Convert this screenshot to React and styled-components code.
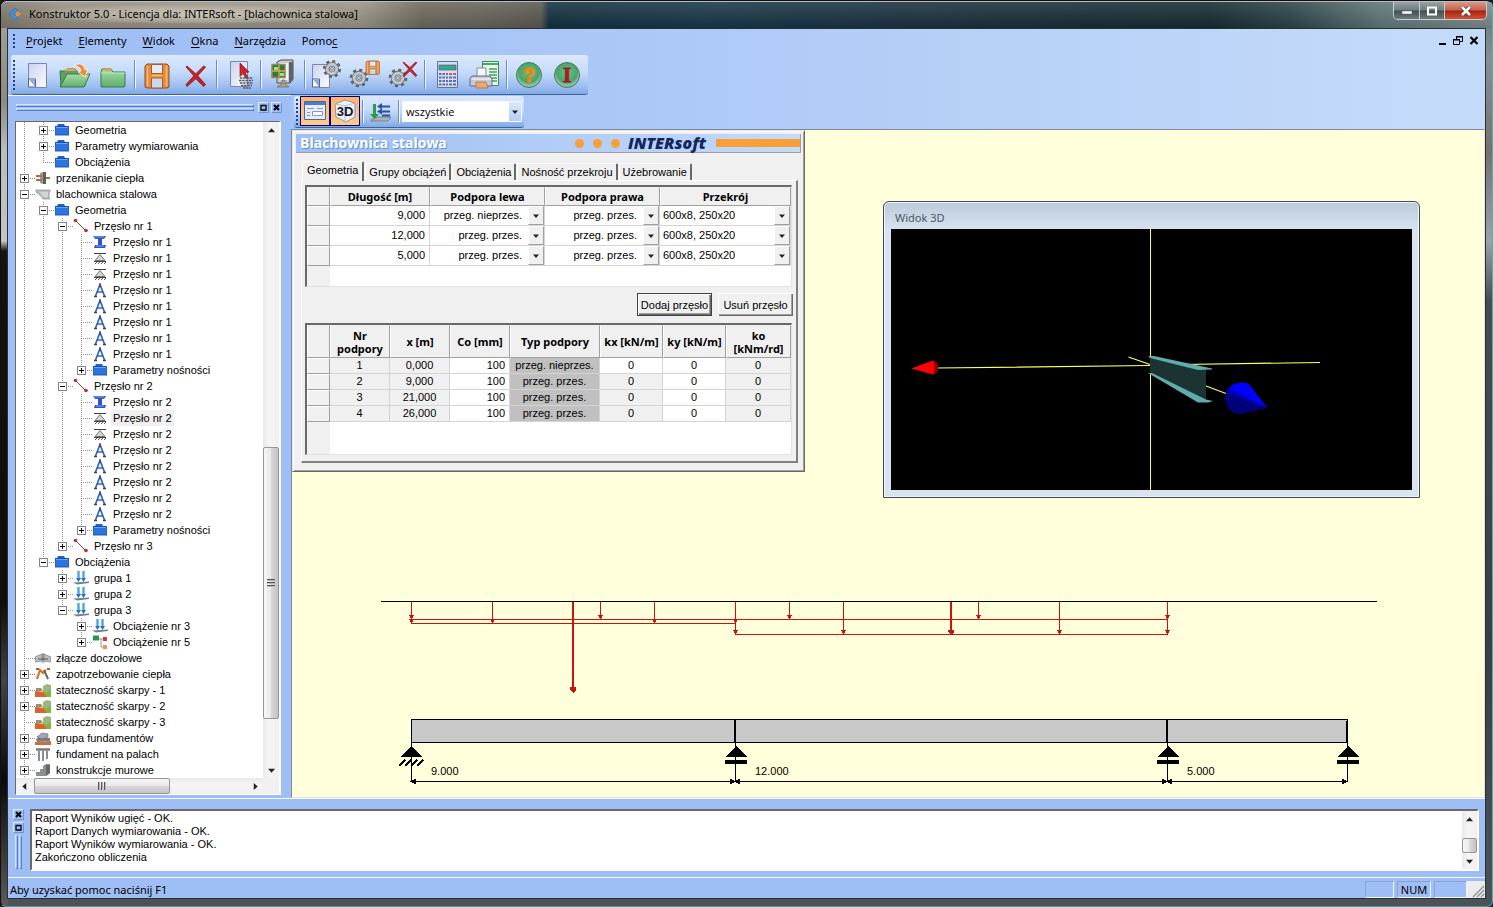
import React from "react";
import styled, { createGlobalStyle } from "styled-components";

const UI = `"Noto Sans", "Open Sans", sans-serif`;
const NARROW = `"Open Sans", "Noto Sans", sans-serif`;
const TEXT = `"Liberation Sans", Arial, sans-serif`;
const BLUE = "#9ebef5";

const Global = createGlobalStyle`
  *, *::before, *::after { box-sizing: border-box; }
  html, body, #root { height: 100%; }
  body { margin: 0; background: #1a1d1e; font: 11px/16px ${TEXT}; color: #000; overflow: hidden; }
  button, select { font: inherit; color: inherit; border-radius: 0; margin: 0; padding: 0; }
  svg { display: block; flex: none; }
`;

/* ---------- window frame ---------- */
const Frame = styled.div`
  min-height: 100%;
  height: 100vh;
  display: flex;
  flex-direction: column;
  border: 1px solid #0c1012;
  border-right-color: #35b8c8;
  border-bottom-color: #2fa3ae;
  border-radius: 7px 7px 6px 6px;
  padding: 0 7px 7px;
  background:
    linear-gradient(#a8a498 0, #8d8a80 100px, #b9bcc0 150px, #c4c4c2 240px, #16120e 250px, #100c08 600px, #444 680px, #0c0a08 780px, #5c5b58 100%) left / 7px 100% no-repeat,
    linear-gradient(#64787a 0, #8b8f8d 60px, #77716a 150px, #9ea2a2 240px, #4a4c4c 300px, #3c3e40 70%, #4c5254 100%) right / 7px 100% no-repeat,
    #4d5355;
`;
const TitleBar = styled.header`
  height: 27px;
  flex: none;
  display: flex;
  justify-content: space-between;
  margin: 0 -7px;
  padding-left: 7px;
  border-top: 1px solid #b9bdbb;
  border-radius: 6px 6px 0 0;
  background:
    linear-gradient(rgba(255,255,255,.12), rgba(0,0,0,.1)),
    linear-gradient(90deg, #7e786c 0, #958f80 60px, #989486 360px, #6d685c 420px, #66635a 480px, #595750 540px, #12303f 548px, #173748 700px, #1a2f3b 960px, #162b30 1210px, #2c4447 1290px, #5f7577 1380px, #7b8a8a 100%);
`;
const Caption = styled.div`
  display: flex;
  align-items: center;
  gap: 7px;
  padding-bottom: 2px;
`;
const AppTitle = styled.h1`
  margin: 0;
  font: 11px/20px ${UI};
  padding: 0 8px;
  margin-left: -8px;
  border-radius: 10px;
  background: radial-gradient(closest-side, rgba(220,216,202,.75), rgba(190,186,172,.45) 80%, rgba(170,166,152,0));
`;
const CaptionButtons = styled.div`
  display: flex;
  height: 18px;
  margin-right: 5px;
  border: 1px solid #c9cfd0;
  border-top: 0;
  border-radius: 0 0 5px 5px;
  overflow: hidden;
`;
const CaptionButton = styled.button`
  width: ${(p) => (p.$close ? 42 : 25)}px;
  border: 0;
  border-left: ${(p) => (p.$first ? 0 : 1)}px solid #c3c9ca;
  display: grid;
  place-items: center;
  background: ${(p) =>
    p.$close
      ? "linear-gradient(#d99a8c, #c4604c 48%, #a8220f 52%, #d0523a)"
      : "linear-gradient(#97a3a4, #6f7d80 48%, #3e4e52 52%, #6c7c7e)"};
`;
const Client = styled.div`
  flex: 1;
  min-height: 0;
  display: flex;
  flex-direction: column;
  border: 1px solid #26303a;
  margin: 0 -1px;
  background: linear-gradient(90deg, ${BLUE}, #a6c4f6 30%, #c4daf9 96%);
`;

/* ---------- menu ---------- */
const MenuRow = styled.div`
  height: 26px;
  flex: none;
  display: flex;
  align-items: center;
  justify-content: space-between;
  padding: 0 5px 2px;
`;
const Menu = styled.nav`
  display: flex;
  align-items: center;
`;
const Grip = styled.span`
  width: 2px;
  height: ${(p) => p.$size}px;
  flex: none;
  margin-right: ${(p) => p.$gap}px;
  background: repeating-linear-gradient(#24418c 0 2px, transparent 2px 4px);
`;
const MenuItem = styled.button`
  border: 0;
  background: none;
  padding: 0 8px;
  font: 11px/20px ${UI};
  u { text-underline-offset: 2px; }
`;
const ChildButtons = styled.div`
  display: flex;
  gap: 4px;
  padding-bottom: 2px;
`;
const PlainButton = styled.button`
  border: 0;
  background: none;
  width: 12px;
  height: 12px;
`;

/* ---------- toolbars ---------- */
const Toolbar = styled.div`
  display: flex;
  align-items: stretch;
  width: max-content;
  flex: none;
  height: ${(p) => p.$height}px;
  margin-left: ${(p) => p.$inset}px;
  padding: 0 2px;
  border-bottom: 1px solid #3b619c;
  border-radius: 3px;
  background: linear-gradient(#dce9fd, #c5dafa 45%, #9dbef0 80%, #82a8e4);
  > ${Grip} { align-self: center; }
`;
const ToolButton = styled.button`
  width: 38px;
  border: 0;
  background: none;
  display: grid;
  place-items: center;
`;
const ToggleButton = styled.button`
  width: 30px;
  height: 30px;
  display: grid;
  place-items: center;
  border: 1px solid #000080;
  background: linear-gradient(#ffb56a, #ffc98a);
`;
const SmallTool = styled(ToolButton)`
  width: 30px;
`;
const Separator = styled.span`
  width: 2px;
  margin: ${(p) => p.$inset}px 2px;
  border-left: 1px solid #6a8ccb;
  border-right: 1px solid #f1f9ff;
`;
const Filter = styled.label`
  display: flex;
  align-self: center;
  width: 120px;
  height: 21px;
  background: #fff;
  border: 1px solid #f8fbff;
  font: 11px/19px ${NARROW};
`;
const FlatSelect = styled.select`
  flex: 1;
  min-width: 0;
  appearance: none;
  border: 0;
  background: transparent;
  padding: 0 ${(p) => (p.$right ? 6 : 3)}px;
  text-align-last: ${(p) => (p.$right ? "right" : "left")};
  outline: 0;
`;
const Arrow = styled.span`
  width: ${(p) => (p.$flat ? 12 : 16)}px;
  display: grid;
  place-items: center;
  background: ${(p) => (p.$flat ? "linear-gradient(#dbe8fc, #b3cdf6)" : "#f0f0f0")};
  border: ${(p) => (p.$flat ? 0 : 1)}px solid;
  border-color: #fff #a0a0a0 #a0a0a0 #fff;
`;

/* ---------- body ---------- */
const Body = styled.div`
  flex: 1;
  min-height: 0;
  display: flex;
`;
const Dock = styled.aside`
  width: 283px;
  flex: none;
  display: flex;
  flex-direction: column;
  border-top: 1px solid #f4f8ff;
  background: ${BLUE};
`;
const DockHeader = styled.div`
  height: 25px;
  flex: none;
  display: flex;
  align-items: center;
  gap: 2px;
  padding: 0 9px 2px 8px;
`;
const Ridges = styled.span`
  display: flex;
  flex-direction: ${(p) => (p.$vertical ? "row" : "column")};
  flex: 1;
  gap: 1px;
  margin-right: ${(p) => (p.$vertical ? 0 : 2)}px;
  &::before, &::after {
    content: "";
    height: ${(p) => (p.$vertical ? "100%" : "3px")};
    width: ${(p) => (p.$vertical ? "3px" : "100%")};
    border: 1px solid;
    border-color: #d5e5fd #5581c4 #5581c4 #d5e5fd;
  }
`;
const TinyButton = styled.button`
  width: 11px;
  height: 11px;
  border: 1px solid;
  border-color: #dceafe #6d94d2 #6d94d2 #dceafe;
  background: none;
  display: grid;
  place-items: center;
`;
const TreeBox = styled.div`
  flex: 1;
  min-height: 0;
  display: grid;
  grid-template: minmax(0, 1fr) 16px / minmax(0, 1fr) 16px;
  margin: 0 10px 3px 7px;
  border: 1px solid;
  border-color: #696969 #fff #fff #696969;
  border-right-width: 2px;
  background: #fff;
`;
const Tree = styled.ul`
  margin: 0;
  padding: 0;
  list-style: none;
  overflow: hidden;
`;
const TreeRow = styled.li`
  height: 16px;
  display: flex;
  align-items: center;
  white-space: nowrap;
`;
const Guide = styled.span`
  width: 19px;
  height: 16px;
  flex: none;
  display: flex;
  align-items: center;
  padding-left: 4px;
  background:
    repeating-linear-gradient(#8c8c8c 0 1px, transparent 1px 2px) 8px 0 / 1px
      ${(p) => (p.$line === "full" ? "16px" : p.$line === "top" ? "8px" : "0")} no-repeat
    ${(p) => (p.$branch ? ", repeating-linear-gradient(90deg, #8c8c8c 0 1px, transparent 1px 2px) 8px 8px / 11px 1px no-repeat" : "")};
`;
const Expander = styled.button`
  width: 9px;
  height: 9px;
  border: 1px solid #848484;
  background:
    linear-gradient(#000, #000) center / 5px 1px no-repeat,
    linear-gradient(#000, #000) center / 1px ${(p) => (p.$open ? 0 : 5)}px no-repeat,
    #fff;
`;
const TreeIcon = styled.span`
  width: 19px;
  flex: none;
`;
const TreeLabel = styled.span`
  padding: 0 2px;
  line-height: 16px;
  background: ${(p) => (p.$selected ? "#f0f0f0" : "none")};
`;
const ScrollTrack = styled.div`
  display: flex;
  flex-direction: ${(p) => (p.$horizontal ? "row" : "column")};
  background: linear-gradient(${(p) => (p.$horizontal ? "180deg" : "90deg")}, #e9e9e9, #f5f5f5 40%, #f0f0f0);
`;
const ScrollArrow = styled.button`
  width: 16px;
  height: 16px;
  max-width: 100%;
  flex: none;
  border: 0;
  background: none;
  display: grid;
  place-items: center;
`;
const ScrollSpace = styled.span`
  flex: ${(p) => p.$grow} 1 0;
`;
const Thumb = styled.span`
  flex: ${(p) => p.$grow} 1 ${(p) => p.$min || 0}px;
  display: grid;
  place-items: center;
  border: 1px solid #979797;
  border-radius: 2px;
  background: linear-gradient(${(p) => (p.$horizontal ? "180deg" : "90deg")}, #f6f6f6, #e9e9eb 48%, #d7d7da 52%, #c4c4c8);
  &::after {
    content: "";
    display: ${(p) => (p.$plain ? "none" : "block")};
    width: 8px;
    height: 8px;
    background: repeating-linear-gradient(${(p) => (p.$horizontal ? "90deg" : "180deg")}, #555 0 1px, #bbb 1px 2px, transparent 2px 3px);
  }
`;
const CornerBox = styled.span`
  background: #f0f0f0;
`;

/* ---------- workspace ---------- */
const Main = styled.main`
  flex: 1;
  min-width: 0;
  display: flex;
  flex-direction: column;
  padding-top: 1px;
`;
const Workspace = styled.section`
  position: relative;
  flex: 1;
  min-height: 0;
  margin-top: 1px;
  display: flex;
  flex-direction: column;
  align-items: flex-start;
  overflow: hidden;
  background: #ffffdc;
  border: 1px solid #808a98;
  border-right-color: #e3e3e3;
  border-bottom-color: #e3e3e3;
`;
const Form = styled.section`
  width: 513px;
  flex: none;
  background: #f0f0f0;
  border: 1px solid;
  border-color: #e3e3e3 #696969 #696969 #e3e3e3;
  box-shadow: inset 1px 1px #fff, inset -1px -1px #a0a0a0;
  padding: 3px 3px 8px 3px;
`;
const FormHeader = styled.header`
  height: 19px;
  display: flex;
  align-items: center;
  padding-left: 4px;
  background: linear-gradient(90deg, ${BLUE}, #c4daf9);
  border-bottom: 1px solid #a0a0a0;
  border-right: 1px solid #a0a0a0;
`;
const FormTitle = styled.h2`
  flex: 1;
  margin: 0;
  color: #fff;
  font: bold 14px/18px ${NARROW};
  text-shadow: 1px 1px #6b8fcb;
`;
const Dots = styled.span`
  display: flex;
  gap: 9px;
  margin-right: 8px;
  &::before, &::after, i { content: ""; width: 9px; height: 9px; border-radius: 50%; background: #f99f35; }
`;
const Brand = styled.strong`
  width: 88px;
  color: #132660;
  font: italic 800 16px/18px ${NARROW};
`;
const BrandBar = styled.span`
  width: 84px;
  height: 8px;
  background: #f99f35;
`;
const Tabs = styled.div`
  display: flex;
  align-items: flex-end;
  height: 27px;
  padding-left: 6px;
`;
const Tab = styled.button`
  height: ${(p) => (p.$active ? 20 : 17)}px;
  line-height: ${(p) => (p.$active ? 16 : 17)}px;
  padding: 0 ${(p) => (p.$active ? 4 : 3)}px ${(p) => (p.$active ? 3 : 0)}px;
  margin-right: 1px;
  background: #f0f0f0;
  border: solid;
  border-width: 1px 2px 0 1px;
  border-color: #fff #696969 #fff #fff;
  border-radius: 2px 2px 0 0;
  position: relative;
  margin-bottom: ${(p) => (p.$active ? -1 : 0)}px;
  z-index: ${(p) => (p.$active ? 1 : 0)};
`;
const TabPage = styled.div`
  margin: 0 3px 0 5px;
  padding: 4px 2px 6px 3px;
  border: solid;
  border-width: 1px 2px 2px 1px;
  border-color: #fff #808080 #808080 #fff;
`;
const GridBox = styled.div`
  width: 487px;
  height: ${(p) => p.$height}px;
  border: solid;
  border-width: 2px 1px 1px 2px;
  border-color: #696969 #e3e3e3 #e3e3e3 #696969;
  background: linear-gradient(90deg, #f0f0f0 23px, #fff 23px);
`;
const Table = styled.table`
  width: 100%;
  table-layout: fixed;
  border-collapse: separate;
  border-spacing: 0;
`;
const HeadCell = styled.th`
  height: ${(p) => p.$height}px;
  padding: 0;
  background: #f0f0f0;
  border: 1px solid;
  border-color: #f0f0f0 #a0a0a0 #a0a0a0 #fff;
  font: bold 11px/13px ${UI};
`;
const RowHead = styled.th`
  padding: 0;
  background: #f0f0f0;
  border: 1px solid;
  border-color: #fff #a0a0a0 #a0a0a0 #fff;
`;
const Cell = styled.td`
  height: ${(p) => p.$height}px;
  padding: 0 ${(p) => (p.$align === "right" ? 4 : 0)}px 0 0;
  line-height: ${(p) => p.$height - 1}px;
  vertical-align: top;
  text-align: ${(p) => p.$align || "center"};
  border-right: 1px solid #d4d4d4;
  border-bottom: 1px solid #d4d4d4;
  background: ${(p) => ({ grey: "#f0f0f0", dark: "#c0c0c0" }[p.$tone] || "#fff")};
`;
const Combo = styled.label`
  display: flex;
  height: 19px;
  line-height: 19px;
`;
const Actions = styled.div`
  display: flex;
  justify-content: flex-end;
  gap: 6px;
  padding: 6px 1px 7px 0;
`;
const PushButton = styled.button`
  width: 75px;
  height: 23px;
  background: #f0f0f0;
  border: ${(p) => (p.$default ? "1px solid #404040" : "0")};
  box-shadow: inset 1px 1px #fff, inset -1px -1px #696969, inset -2px -2px #a0a0a0;
`;
const Viewer = styled.section`
  position: absolute;
  top: 71px;
  right: 64px;
  width: 537px;
  height: 297px;
  display: flex;
  flex-direction: column;
  padding: 0 7px 7px;
  border: 1px solid #404850;
  border-radius: 6px 6px 0 0;
  box-shadow: inset 0 0 0 1px #eef5fc;
  background: linear-gradient(#bccad9, #cfdcea 20px, #d8e4f1 30px);
`;
const ViewerTitle = styled.h2`
  margin: 0;
  height: 27px;
  flex: none;
  padding: 6px 4px 0;
  font: 11px/20px ${UI};
  color: #4c5660;
`;
const Diagram = styled.svg`
  width: 100%;
  flex: 1 0 326px;
`;

/* ---------- bottom ---------- */
const OutputPane = styled.section`
  height: 80px;
  flex: none;
  display: flex;
  gap: 5px;
  padding: 10px 6px 6px 4px;
  border-top: 1px solid #f4f8ff;
  border-bottom: 1px solid #f4f8ff;
  background: ${BLUE};
`;
const OutputTools = styled.div`
  width: 13px;
  display: flex;
  flex-direction: column;
  align-items: center;
  gap: 2px;
  padding-bottom: 2px;
`;
const OutputBox = styled.div`
  flex: 1;
  display: flex;
  justify-content: space-between;
  background: #fff;
  border: 2px solid;
  border-color: #696969 #fff #fff #696969;
`;
const Log = styled.ol`
  margin: 0;
  padding: 1px 3px;
  list-style: none;
  line-height: 13px;
`;
const OutputScroll = styled(ScrollTrack)`
  width: 15px;
`;
const StatusBar = styled.footer`
  height: 20px;
  flex: none;
  display: flex;
  align-items: stretch;
  gap: 3px;
  padding: 3px 0 0 2px;
  background: ${BLUE};
  font: 11px/18px ${UI};
`;
const StatusText = styled.span`
  flex: 1;
`;
const StatusCell = styled.span`
  width: ${(p) => p.$width}px;
  text-align: center;
  border: 1px solid;
  border-color: #8aa3cc #f4f8ff #f4f8ff #8aa3cc;
  line-height: 16px;
`;
const SizeGrip = styled.span`
  width: 18px;
  margin-left: -3px;
  background: linear-gradient(135deg, #f0f0f0, #e4e6ea);
`;

/* ---------- small glyphs ---------- */
const Tri = ({ dir = "down", size = 7 }) => (
  <svg width={size} height={size} viewBox="0 0 8 8" aria-hidden="true">
    <path d={{ down: "M0 2h8L4 6.5z", up: "M0 6h8L4 1.5z", left: "M6 0v8L1.5 4z", right: "M2 0v8l4.500-4z" }[dir]} fill="#222" />
  </svg>
);
const CrossGlyph = () => (
  <svg width="7" height="7" viewBox="0 0 7 7"><path d="M1 1l5 5M6 1L1 6" stroke="#000" strokeWidth="2" /></svg>
);
const SquareGlyph = () => (
  <svg width="7" height="7" viewBox="0 0 7 7"><path d="M1 1.500h5V6H1z" fill="none" stroke="#000" strokeWidth="1.300" /></svg>
);

/* ---------- toolbar icons (32 x 32) ---------- */
const Icon = ({ children, size = 32 }) => (
  <svg width={size} height={size} viewBox={`0 0 ${size} ${size}`} aria-hidden="true">{children}</svg>
);
const Gear = ({ x, y, s = 1 }) => (
  <g transform={`translate(${x} ${y}) scale(${s})`}>
    <circle r="7.500" fill="none" stroke="#5d6268" strokeWidth="4" strokeDasharray="2.900 2.990" />
    <circle r="5" fill="none" stroke="#6c7278" strokeWidth="4.600" />
    <circle r="5" fill="none" stroke="#c3c8cc" strokeWidth="3" />
    <circle r="1.500" fill="#e8eef8" stroke="#666" strokeWidth=".8" />
  </g>
);
const Page = ({ x = 6, y = 4, w = 18, h = 24 }) => (
  <g transform={`translate(${x} ${y})`}>
    <path d={`M.5 .5h${w}v${h}H7L.5 ${h - 7}z`} fill="url(#page)" stroke="#7c86a8" />
    <path d={`M.5 ${h - 8}h7v8H.5z`} fill="#f5f8ff" stroke="#53649a" />
    <path d={`M1 ${h - 7.500}l6 7v-7z`} fill="#9aa9d4" />
  </g>
);
const Floppy = ({ x, y, s = 1 }) => (
  <g transform={`translate(${x} ${y}) scale(${s})`}>
    <path d="M2 0h20l2 2v21l-2 1H2l-2-1V2z" fill="#ec8a34" stroke="#8a5026" />
    <path d="M6.500 .5h11v9h-11z" fill="#e3e9f6" stroke="#a0602e" />
    <path d="M6.500 14h11v10h-11z" fill="#ccd8ee" stroke="#a0602e" />
    <path d="M2.500 2v20M21.500 2v20M7 11.500h10" stroke="#ffc183" strokeWidth="1.500" />
  </g>
);
const RedX = ({ x, y, s = 1 }) => (
  <path transform={`translate(${x} ${y}) scale(${s})`} d="M1 0l9 8 8-8 2 1-8 9 8 9-2 2-8-8-9 8-1-2 8-9-8-9z" fill="#c3242a" stroke="#8b1418" strokeWidth=".8" />
);
const toolbarIcons = {
  nowy: <Icon><Page x={7} /></Icon>,
  otworz: (
    <Icon>
      <path d="M1 12h5l2-2h8l2 3h8v14H2z" fill="#5fa068" stroke="#3a7444" />
      <path d="M6 10h10l1 2H5z" fill="#f0a040" />
      <path d="M1 28L8 15h23l-6 13z" fill="url(#green)" stroke="#3a7a46" />
      <path d="M15 7c5-4 10-2 11 4l3-1-3 8-7-5 3-1c0-3-3-5-7-5z" fill="#f58a2c" stroke="#fff" strokeWidth=".8" />
    </Icon>
  ),
  folder: (
    <Icon>
      <path d="M4 13l1-3h9l2 3h12v14l-1 1H4z" fill="url(#green)" stroke="#3a7a46" />
      <path d="M6 10h8l1 2H6z" fill="#f0a040" />
      <path d="M4 14h24" stroke="#bde6c0" />
    </Icon>
  ),
  zapisz: <Icon><Floppy x={4} y={5} /></Icon>,
  usun: <Icon><RedX x={7} y={7} s={0.98} /></Icon>,
  wskaz: (
    <Icon>
      <path d="M7.500 2.500h17v25h-17z" fill="url(#page)" stroke="#7c86a8" />
      <path d="M17 4l9 9-4 .5 3 5-2 1-3-5-3 3z" fill="#d3202c" stroke="#8a1018" strokeWidth=".7" />
      <path d="M17 19h13M16 21.500h14M17 24h13M18 26.500h11M20 29h8" stroke="#555b66" strokeWidth="1.600" strokeDasharray="2.500 .7" />
    </Icon>
  ),
  archiwum: (
    <Icon>
      <path d="M10 3l4-2h12v19l-3 4H10z" fill="#c9ced2" stroke="#4a4e52" />
      <path d="M22 3h4v18l-4 3z" fill="#5f6368" />
      <path d="M13 4h8v17h-8z" fill="#f3f4f5" />
      <path d="M5 5.500h13v13H5z" fill="#2f7d3b" stroke="#9b8458" strokeWidth="1.500" />
      <path d="M5 12h13M12 6v12" stroke="#e6a53c" strokeWidth="1.300" />
      <path d="M7 8h4v3H7zM13 14h4v3h-4z" fill="#8fe3a2" />
      <path d="M15 21v4l-5 3h12l-4-3v-4z" fill="#a8a18c" stroke="#6e6753" strokeWidth=".7" />
    </Icon>
  ),
  nowyElement: <Icon><Page x={1} y={5} w={17} h={23} /><Gear x={21} y={10} s={0.95} /></Icon>,
  zapiszElement: <Icon><Gear x={10} y={19} s={0.98} /><Floppy x={17} y={2} s={0.56} /></Icon>,
  usunElement: <Icon><Gear x={11} y={19} s={0.98} /><RedX x={16} y={3} s={0.7} /></Icon>,
  kalkulator: (
    <Icon>
      <path d="M6.500 2.500h20v26h-20z" fill="#d5ddf0" stroke="#62719c" />
      <path d="M8 6h17v5H8z" fill="#3ba58a" stroke="#54606e" strokeWidth=".7" />
      <path d="M8 15h9M8 18.500h9M8 22h9M8 25.500h9" stroke="#5b6fa4" strokeWidth="2" strokeDasharray="2.500 1" />
      <path d="M18 15h8" stroke="#c65a68" strokeWidth="2" strokeDasharray="3 1" />
      <path d="M18 18.500h8M18 22h8M18 25.500h8" stroke="#5b6fa4" strokeWidth="2" strokeDasharray="3 1" />
    </Icon>
  ),
  drukuj: (
    <Icon>
      <path d="M13.500 2.500h16v24h-16z" fill="#eefaf0" stroke="#3b8c4e" />
      <path d="M14 4h15v2H14z" fill="#3fae5a" />
      <path d="M20 10h8M20 13h8M20 16h8M20 19h8M20 22h8" stroke="#41a35b" strokeWidth="1.600" />
      <path d="M8 9h9v9H8z" fill="#f5f8ff" stroke="#7e89a6" />
      <path d="M3 17h18l2 3v7H1v-7z" fill="#c3c9d6" stroke="#606a80" />
      <path d="M2 20h20" stroke="#fff" />
      <path d="M7 23h10l2 6H7z" fill="#f0a76a" stroke="#a06a40" strokeWidth=".7" />
    </Icon>
  ),
  pomoc: (
    <Icon>
      <circle cx="16" cy="16" r="12.500" fill="url(#orb)" stroke="#457a60" />
      <text x="16" y="23" textAnchor="middle" fontFamily="Liberation Sans, sans-serif" fontWeight="bold" fontSize="21" fill="#ff8c10" stroke="#ee7c10" strokeWidth="1">?</text>
    </Icon>
  ),
  intersoft: (
    <Icon>
      <circle cx="16" cy="16" r="12.500" fill="url(#orb)" stroke="#457a60" />
      <text x="16" y="23" textAnchor="middle" fontFamily="Liberation Serif, serif" fontWeight="bold" fontSize="21" fill="#b8182c" stroke="#a01428" strokeWidth=".8">I</text>
    </Icon>
  ),
};

/* ---------- tree icons (16 x 16) ---------- */
const treeIcons = {
  folder: (
    <Icon size={16}>
      <path d="M1 4h2l1-2h6l1 2h4v9.500H1z" fill="#1f62cf" />
      <path d="M2 5h12v7H2z" fill="#2f74dc" />
      <path d="M1 4.500h14" stroke="#1450b0" /><path d="M2 5.500h12" stroke="#6ba6f4" />
    </Icon>
  ),
  wall: (
    <Icon size={16}>
      <path d="M5 3l3-1v12l-3-1z" fill="#9a9a98" /><path d="M8 2h3v12H8z" fill="#5c5f62" />
      <path d="M1 6h6M1 10h6M11 8h4" stroke="#b56a3a" strokeWidth="1.800" />
    </Icon>
  ),
  plate: (
    <Icon size={16}>
      <path d="M1 4h14v2l-1 1v5l1 1H8l-2-3-5-4z" fill="#b9bdbd" stroke="#8a8e8e" strokeWidth=".7" />
      <path d="M5 6h8v5H8z" fill="#d2d5d5" />
    </Icon>
  ),
  span: (
    <Icon size={16}>
      <path d="M3 3l10 10" stroke="#555" /><circle cx="2.500" cy="2.500" r="1.800" fill="#c92a2a" /><circle cx="13" cy="12.500" r="1.800" fill="#c92a2a" />
    </Icon>
  ),
  profile: (
    <Icon size={16}>
      <path d="M1 2h13l-2 3h-2v6h4l-1 3H2l1-3h3V5H3z" fill="#2c55c8" /><path d="M2 3h10M4 12h8" stroke="#86a8f4" />
    </Icon>
  ),
  support: (
    <Icon size={16}>
      <path d="M2 3.500h12M2 11.500h12" stroke="#444" /><path d="M8 4.500l5 6H3z" fill="#d2d6d2" stroke="#777" />
      <path d="M3 14l2-2M6 14l2-2M9 14l2-2M12 14l2-2" stroke="#555" />
    </Icon>
  ),
  truss: (
    <Icon size={16}>
      <path d="M8 2.500L3.500 14M8 2.500L12.500 14M4.500 10h7" stroke="#3c62b0" strokeWidth="1.700" fill="none" />
      <path d="M8 1v4M2 14.500h3M11 14.500h3" stroke="#27427e" strokeWidth="1.300" />
    </Icon>
  ),
  load: (
    <Icon size={16}>
      <path d="M5.500 1v8M10.500 1v8" stroke="#4fa3e6" strokeWidth="2.400" />
      <path d="M3 8h5l-2.500 4zM8 8h5l-2.500 4z" fill="#2c6fc4" />
      <path d="M0 12.500l16-1v1.500l-12 1.500z" fill="#6f8488" />
    </Icon>
  ),
  nodes: (
    <Icon size={16}>
      <path d="M6 5h6M9 5v8h3" stroke="#999" fill="none" />
      <path d="M1 1.500h6v5H1z" fill="#25984a" /><path d="M11 3h4v4h-4z" fill="#c83a48" /><path d="M11 11h4v4h-4z" fill="#ef9348" />
    </Icon>
  ),
  joint: (
    <Icon size={16}>
      <path d="M0 7l7-3v7l-7 1zM9 4l7 3v5l-7-1z" fill="#bcbfc0" stroke="#85898b" strokeWidth=".8" /><path d="M8 3v10M3 9h10" stroke="#555" />
    </Icon>
  ),
  heat: (
    <Icon size={16}>
      <path d="M2 13l3-9 3 3 3-3" stroke="#d8742a" strokeWidth="2.200" fill="none" /><path d="M9 4l4 9" stroke="#666" strokeWidth="2" />
      <path d="M1 3h3M12 3h3" stroke="#b95a28" strokeWidth="2" />
    </Icon>
  ),
  slope: (
    <Icon size={16}>
      <path d="M0 14l7-4 9-7v12H0z" fill="#7eb83e" /><path d="M0 14V9l8 1 4 5H0z" fill="#e0602c" />
      <path d="M8 4l4-2 4 1v5l-5 3-3-3z" fill="#9bb57e" /><path d="M1 6h5l2 3-7 1z" fill="#a58a6e" />
    </Icon>
  ),
  footing: (
    <Icon size={16}>
      <path d="M0 12l16-1v4H0z" fill="#c4713a" /><path d="M1 9l4-2 10 1v3l-13 1z" fill="#7b7f82" /><path d="M2 7l5-4 6 1v3l-6 2z" fill="#a4a8aa" stroke="#5d6062" strokeWidth=".6" />
    </Icon>
  ),
  piles: (
    <Icon size={16}>
      <path d="M1 3.500h14" stroke="#777" strokeWidth="2.500" /><path d="M4 5v10M8 5v10M12 5v8" stroke="#8b8e90" strokeWidth="2" />
    </Icon>
  ),
  masonry: (
    <Icon size={16}>
      <path d="M1 14v-4h4V7h3V4l3-2h4v9l-4 3z" fill="#8b8f91" /><path d="M11 3h4v8l-4 3z" fill="#66696b" />
    </Icon>
  ),
};

const rep = (n, item) => Array.from({ length: n }, () => item);
const spanChildren = (nr, selected) => [
  [3, "profile", `Przęsło nr ${nr}`],
  [3, "support", `Przęsło nr ${nr}`, null, selected],
  [3, "support", `Przęsło nr ${nr}`],
  ...rep(5, [3, "truss", `Przęsło nr ${nr}`]),
  [3, "folder", "Parametry nośności", "+"],
];
const treeData = [
  [1, "folder", "Geometria", "+"],
  [1, "folder", "Parametry wymiarowania", "+"],
  [1, "folder", "Obciążenia"],
  [0, "wall", "przenikanie ciepła", "+"],
  [0, "plate", "blachownica stalowa", "-"],
  [1, "folder", "Geometria", "-"],
  [2, "span", "Przęsło nr 1", "-"],
  ...spanChildren(1, false),
  [2, "span", "Przęsło nr 2", "-"],
  ...spanChildren(2, true),
  [2, "span", "Przęsło nr 3", "+"],
  [1, "folder", "Obciążenia", "-"],
  [2, "load", "grupa 1", "+"],
  [2, "load", "grupa 2", "+"],
  [2, "load", "grupa 3", "-"],
  [3, "load", "Obciążenie nr 3", "+"],
  [3, "nodes", "Obciążenie nr 5", "+"],
  [0, "joint", "złącze doczołowe"],
  [0, "heat", "zapotrzebowanie ciepła", "+"],
  [0, "slope", "stateczność skarpy - 1", "+"],
  [0, "slope", "stateczność skarpy - 2", "+"],
  [0, "slope", "stateczność skarpy - 3"],
  [0, "footing", "grupa fundamentów", "+"],
  [0, "piles", "fundament na palach", "+"],
  [0, "masonry", "konstrukcje murowe", "+"],
];

/* A level keeps its guide line as long as a later row returns to it before a shallower one. */
const continues = (index, level) => {
  if (level === 0) return true;
  for (let i = index + 1; i < treeData.length; i++) {
    if (treeData[i][0] < level) return false;
    if (treeData[i][0] === level) return true;
  }
  return false;
};

function ProjectTree() {
  return (
    <Tree>
      {treeData.map(([depth, icon, label, state, selected], i) => (
        <TreeRow key={i}>
          {Array.from({ length: depth }, (_, level) => (
            <Guide key={level} $line={continues(i, level) ? "full" : "none"} />
          ))}
          <Guide $branch $line={continues(i, depth) ? "full" : "top"}>
            {state && <Expander $open={state === "-"} aria-label={state === "-" ? "Zwiń" : "Rozwiń"} />}
          </Guide>
          <TreeIcon>{treeIcons[icon]}</TreeIcon>
          <TreeLabel $selected={selected}>{label}</TreeLabel>
        </TreeRow>
      ))}
    </Tree>
  );
}

const menuItems = [["", "P", "rojekt"], ["", "E", "lementy"], ["", "W", "idok"], ["", "O", "kna"], ["", "N", "arzędzia"], ["Pomo", "c", ""]];
const toolGroups = [
  [["nowy", "Nowy projekt"], ["otworz", "Otwórz"], ["folder", "Zamknij"]],
  [["zapisz", "Zapisz"], ["usun", "Usuń"]],
  [["wskaz", "Wybierz"]],
  [["archiwum", "Archiwum"]],
  [["nowyElement", "Nowy element"], ["zapiszElement", "Zapisz element"], ["usunElement", "Usuń element"]],
  [["kalkulator", "Obliczenia"], ["drukuj", "Drukuj"]],
  [["pomoc", "Pomoc"], ["intersoft", "O programie"]],
];

const spans = [
  ["9,000", "przeg. nieprzes.", "przeg. przes."],
  ["12,000", "przeg. przes.", "przeg. przes."],
  ["5,000", "przeg. przes.", "przeg. przes."],
];
const supports = [
  ["1", "0,000", "przeg. nieprzes."],
  ["2", "9,000", "przeg. przes."],
  ["3", "21,000", "przeg. przes."],
  ["4", "26,000", "przeg. przes."],
];

const CellSelect = ({ value, right, label }) => (
  <Combo>
    <FlatSelect $right={right} aria-label={label} defaultValue={value}>
      <option>{value}</option>
    </FlatSelect>
    <Arrow><Tri size={6} /></Arrow>
  </Combo>
);

const Columns = ({ widths }) => (
  <colgroup>{widths.map((w, i) => <col key={i} style={{ width: w || undefined }} />)}</colgroup>
);

function SpanTable() {
  return (
    <GridBox $height={102}>
      <Table>
        <Columns widths={[23, 100, 115, 115, 0]} />
        <thead>
          <tr>
            {["", "Długość [m]", "Podpora lewa", "Podpora prawa", "Przekrój"].map((h) => <HeadCell key={h} $height={19}>{h}</HeadCell>)}
          </tr>
        </thead>
        <tbody>
          {spans.map(([len, left, right]) => (
            <tr key={len}>
              <RowHead />
              <Cell $height={20} $align="right">{len}</Cell>
              <Cell $height={20}><CellSelect value={left} right label="Podpora lewa" /></Cell>
              <Cell $height={20}><CellSelect value={right} right label="Podpora prawa" /></Cell>
              <Cell $height={20}><CellSelect value="600x8, 250x20" label="Przekrój" /></Cell>
            </tr>
          ))}
        </tbody>
      </Table>
    </GridBox>
  );
}

function SupportTable() {
  return (
    <GridBox $height={132}>
      <Table>
        <Columns widths={[23, 60, 60, 60, 90, 63, 63, 0]} />
        <thead>
          <tr>
            {["", "Nr podpory", "x [m]", "Co [mm]", "Typ podpory", "kx [kN/m]", "ky [kN/m]", "ko [kNm/rd]"].map((h) => (
              <HeadCell key={h} $height={33}>{h}</HeadCell>
            ))}
          </tr>
        </thead>
        <tbody>
          {supports.map(([nr, x, type], i) => (
            <tr key={nr}>
              <RowHead />
              <Cell $height={16} $tone="grey">{nr}</Cell>
              <Cell $height={16} $tone="grey">{x}</Cell>
              <Cell $height={16} $align="right">100</Cell>
              <Cell $height={16} $tone="dark">{type}</Cell>
              <Cell $height={16} $tone={i ? "grey" : ""}>0</Cell>
              <Cell $height={16}>0</Cell>
              <Cell $height={16} $tone="grey">0</Cell>
            </tr>
          ))}
        </tbody>
      </Table>
    </GridBox>
  );
}

function GirderForm() {
  return (
    <Form>
      <FormHeader>
        <FormTitle>Blachownica stalowa</FormTitle>
        <Dots><i /></Dots>
        <Brand>INTERsoft</Brand>
        <BrandBar />
      </FormHeader>
      <Tabs role="tablist">
        {["Geometria", "Grupy obciążeń", "Obciążenia", "Nośność przekroju", "Użebrowanie"].map((t, i) => (
          <Tab key={t} role="tab" aria-selected={i === 0} $active={i === 0}>{t}</Tab>
        ))}
      </Tabs>
      <TabPage>
        <SpanTable />
        <Actions>
          <PushButton $default>Dodaj przęsło</PushButton>
          <PushButton>Usuń przęsło</PushButton>
        </Actions>
        <SupportTable />
      </TabPage>
    </Form>
  );
}

function View3D() {
  return (
    <Viewer>
      <ViewerTitle>Widok 3D</ViewerTitle>
      <svg width="521" height="261" viewBox="891 229 521 261" role="img" aria-label="Widok 3D">
        <path d="M891 229h521v261H891z" fill="#000" />
        <g stroke="#ffff60" fill="none">
          <path d="M1150.500 229v261" />
          <path d="M936 368L1150 365.500M1150 365L1320 362.500" strokeWidth="1.200" />
          <path d="M1128.500 357L1150 364.500M1206 386L1226 393.500" strokeWidth="1.200" />
        </g>
        <path d="M911 368.500l22-8c4 2 4 12 0 14z" fill="#f00" />
        <path d="M933 360.500c7 0 7 14 0 14 2-4 2-10 0-14z" fill="#8c0000" />
        <path d="M1150 357L1206 369V401L1150 374z" fill="#1b3333" />
        <path d="M1148 356h6l58 12.500v1l-14 .5-48-12z" fill="#5eacac" />
        <path d="M1148 373h4l54 26.500 7 1.500-5 1.500h-10z" fill="#5eacac" />
        <path d="M1226 393c3-9 15-13 23-9l18 23.500-25 6c-11 1-18-7-16-20.500z" fill="#00f" />
        <path d="M1226 392l41 15.500-25 6c-11 1-18-7-16-21.500z" fill="#000078" />
        <path d="M1228 388l39 19.500-41-14z" fill="#0000b0" />
      </svg>
    </Viewer>
  );
}

const RED = "#c8140c";
const DownArrow = ({ x, y, top = 602 }) => (
  <g stroke={RED} fill={RED}>
    <path d={`M${x + 0.5} ${top}V${y}`} />
    <path d={`M${x - 1.500} ${y - 4}h4l-2 4z`} />
  </g>
);
const Roller = ({ x }) => (
  <g>
    <path d={`M${x + 0.5} 743v38.500`} stroke="#000" />
    <path d={`M${x + 1} 746l11 11h-22z`} />
    <path d={`M${x - 10} 760h22v4h-22z`} />
  </g>
);
const DimLine = ({ from, to }) => (
  <path d={`M${from} 781.500H${to}M${from + 4.500} 779.500l-4 2 4 2zM${to - 4.500} 779.500l4 2-4 2z`} stroke="#000" fill="none" />
);

function BeamDiagram() {
  return (
    <Diagram viewBox="292 472 1192 326" preserveAspectRatio="xMinYMin meet" role="img" aria-label="Schemat belki">
      <g shapeRendering="crispEdges">
        <path d="M381 601.500H1377" stroke="#000" />
        <path d="M411 619.500H1168M411 623.500H736M735 634.500H1168" stroke={RED} />
        {[[411, 619], [411, 623], [492, 623], [600, 619], [654, 623], [735, 623], [735, 634], [789, 619], [843, 634], [978, 619], [1059, 634], [1167, 619], [1167, 634]].map(([x, y]) => (
          <DownArrow key={`${x}-${y}`} x={x} y={y} />
        ))}
        <path d="M573 602v88M951 602v30" stroke={RED} strokeWidth="2" />
        <path d="M570 687h6v3l-3 3-3-3zM948 630h6v2l-3 3-3-3z" fill={RED} />
        <path d="M411.500 719.500H1347.500V742.500H411.500z" fill="#c8c8c8" stroke="#000" />
        <path d="M735 720v23M1167 720v23M1347 721v22" stroke="#000" strokeWidth="2" />
        <path d="M411.500 743v38.500" stroke="#000" />
        <path d="M411.500 746l11 11h-22z" />
        <path d="M399 766l6-6M405 766l6-6M411 766l6-6M417 766l6-6" stroke="#000" strokeWidth="1.500" />
        <Roller x={735} /><Roller x={1167} /><Roller x={1347} />
        <DimLine from={411} to={735} /><DimLine from={735} to={1167} /><DimLine from={1167} to={1347} />
      </g>
      <g fontFamily="Liberation Sans, Arial, sans-serif" fontSize="11">
        <text x="431" y="775">9.000</text><text x="755" y="775">12.000</text><text x="1187" y="775">5.000</text>
      </g>
    </Diagram>
  );
}

export default function App() {
  return (
    <Frame>
      <Global />
      <svg width="0" height="0" style={{ position: "absolute" }} aria-hidden="true">
        <defs>
          <linearGradient id="page" x1="0" y1="0" x2="1" y2="1"><stop stopColor="#c9d3f0" /><stop offset="1" stopColor="#fbfcff" /></linearGradient>
          <linearGradient id="green" x1="0" y1="0" x2="0" y2="1"><stop stopColor="#a6dcaa" /><stop offset="1" stopColor="#5fae6c" /></linearGradient>
          <radialGradient id="orb" cy=".4"><stop stopColor="#68c884" /><stop offset=".8" stopColor="#46a468" /><stop offset="1" stopColor="#8cbfa0" /></radialGradient>
        </defs>
      </svg>
      <TitleBar>
        <Caption>
          <svg width="14" height="16" viewBox="0 0 14 16"><path d="M7 2l3 2-4 4 4 4-3 2-6-6z" fill="#3f8fdc" stroke="#2b6bb0" strokeWidth=".6" /><path d="M9 5l4 3-4 3-2-3z" fill="#f08a3c" /></svg>
          <AppTitle>Konstruktor 5.0 - Licencja dla: INTERsoft - [blachownica stalowa]</AppTitle>
        </Caption>
        <CaptionButtons>
          <CaptionButton $first aria-label="Minimalizuj"><svg width="12" height="10" viewBox="0 0 12 10"><path d="M1 5h10v3H1z" fill="#fff" stroke="#556" strokeWidth=".5" /></svg></CaptionButton>
          <CaptionButton aria-label="Maksymalizuj"><svg width="12" height="10" viewBox="0 0 12 10"><path d="M2 1.500h8v7H2z" fill="none" stroke="#fff" strokeWidth="2" /></svg></CaptionButton>
          <CaptionButton $close aria-label="Zamknij"><svg width="12" height="10" viewBox="0 0 12 10"><path d="M2 1l8 8M10 1L2 9" stroke="#5a2a28" strokeWidth="4" /><path d="M2 1l8 8M10 1L2 9" stroke="#fff" strokeWidth="2.600" /></svg></CaptionButton>
        </CaptionButtons>
      </TitleBar>
      <Client>
        <MenuRow>
          <Menu>
            <Grip $size={14} $gap={3} />
            {menuItems.map(([before, key, after]) => (
              <MenuItem key={before + key}>{before}<u>{key}</u>{after}</MenuItem>
            ))}
          </Menu>
          <ChildButtons>
            <PlainButton aria-label="Minimalizuj okno"><svg width="12" height="12" viewBox="0 0 12 12"><path d="M3 9h7v2H3z" /></svg></PlainButton>
            <PlainButton aria-label="Przywróć okno"><svg width="12" height="12" viewBox="0 0 12 12"><path d="M4.500 5V2.500h6v5H8M1.500 5.500h6v5h-6z" fill="none" stroke="#000" /><path d="M4 2h7v1.500H4zM1 5h7v1.500H1z" /></svg></PlainButton>
            <PlainButton aria-label="Zamknij okno"><svg width="12" height="12" viewBox="0 0 12 12"><path d="M2.500 3l7 7M9.500 3l-7 7" stroke="#000" strokeWidth="2.200" /></svg></PlainButton>
          </ChildButtons>
        </MenuRow>
        <Toolbar $height={40} $inset={3} role="toolbar" aria-label="Główny">
          <Grip $size={30} $gap={3} />
          {toolGroups.map((group, g) => (
            <React.Fragment key={g}>
              {g > 0 && <Separator $inset={5} />}
              {group.map(([icon, label]) => <ToolButton key={icon} aria-label={label}>{toolbarIcons[icon]}</ToolButton>)}
            </React.Fragment>
          ))}
        </Toolbar>
        <Body>
          <Dock>
            <DockHeader>
              <Ridges />
              <TinyButton aria-label="Odepnij panel"><SquareGlyph /></TinyButton>
              <TinyButton aria-label="Zamknij panel"><CrossGlyph /></TinyButton>
            </DockHeader>
            <TreeBox>
              <ProjectTree />
              <ScrollTrack>
                <ScrollArrow aria-label="W górę"><Tri dir="up" /></ScrollArrow>
                <ScrollSpace $grow={309} />
                <Thumb $grow={271} />
                <ScrollSpace $grow={43} />
                <ScrollArrow aria-label="W dół"><Tri /></ScrollArrow>
              </ScrollTrack>
              <ScrollTrack $horizontal>
                <ScrollArrow aria-label="W lewo"><Tri dir="left" /></ScrollArrow>
                <ScrollSpace $grow={2} />
                <Thumb $horizontal $grow={135} />
                <ScrollSpace $grow={77} />
                <ScrollArrow aria-label="W prawo"><Tri dir="right" /></ScrollArrow>
              </ScrollTrack>
              <CornerBox />
            </TreeBox>
          </Dock>
          <Main>
            <Toolbar $height={32} $inset={3} role="toolbar" aria-label="Widok">
              <Grip $size={26} $gap={2} />
              <ToggleButton aria-label="Formularz" aria-pressed="true">
                <Icon size={24}>
                  <path d="M1.500 2.500h21v18h-21z" fill="#e7edfb" stroke="#4668a8" /><path d="M2 3h20v3H2z" fill="#4f7ac8" />
                  <path d="M4 9.500h7M14 9.500h6M4 16.500h3M4 13.500h3" stroke="#8796bc" /><path d="M9.500 12.500h10v4h-10z" fill="#fff" stroke="#8796bc" />
                </Icon>
              </ToggleButton>
              <ToggleButton aria-label="Widok 3D" aria-pressed="true">
                <Icon size={24}>
                  <path d="M2 5l10-4 10 3v14l-9 5-10-5z" fill="#eef1f6" stroke="#8b93a4" /><path d="M2 5l10 2 10-3M12 7v16" stroke="#b6bdca" fill="none" />
                  <text x="12" y="17" textAnchor="middle" fontFamily="Liberation Sans, sans-serif" fontWeight="bold" fontSize="13" fill="#10142c">3D</text>
                </Icon>
              </ToggleButton>
              <Separator $inset={4} />
              <SmallTool aria-label="Obciążenia">
                <Icon size={24}>
                  <path d="M2 20l6-3h14l-3 4H2z" fill="#a9b2b6" stroke="#6c7679" strokeWidth=".8" />
                  <path d="M4 4h3v10h3l-4.500 5L1 14h3z" fill="#2c9c4c" /><path d="M10 6.500h11M10 11.500h11M13 15.500h8" stroke="#2d4fa8" strokeWidth="2" />
                  <path d="M13 3l-5 3.500 5 3zM13 8.500l-5 3 5 3z" fill="#2d4fa8" />
                </Icon>
              </SmallTool>
              <Separator $inset={4} />
              <Filter>
                <FlatSelect aria-label="Filtr" defaultValue="wszystkie"><option>wszystkie</option></FlatSelect>
                <Arrow $flat><Tri size={6} /></Arrow>
              </Filter>
            </Toolbar>
            <Workspace>
              <GirderForm />
              <BeamDiagram />
              <View3D />
            </Workspace>
          </Main>
        </Body>
        <OutputPane>
          <OutputTools>
            <TinyButton aria-label="Zamknij raport"><CrossGlyph /></TinyButton>
            <TinyButton aria-label="Odepnij raport"><SquareGlyph /></TinyButton>
            <Ridges $vertical />
          </OutputTools>
          <OutputBox>
            <Log>
              <li>Raport Wyników ugięć - OK.</li>
              <li>Raport Danych wymiarowania - OK.</li>
              <li>Raport Wyników wymiarowania - OK.</li>
              <li>Zakończono obliczenia</li>
            </Log>
            <OutputScroll>
              <ScrollArrow aria-label="W górę"><Tri dir="up" /></ScrollArrow>
              <ScrollSpace $grow={1} />
              <Thumb $plain $min={15} $grow={0} />
              <ScrollArrow aria-label="W dół"><Tri /></ScrollArrow>
            </OutputScroll>
          </OutputBox>
        </OutputPane>
        <StatusBar>
          <StatusText>Aby uzyskać pomoc naciśnij F1</StatusText>
          <StatusCell $width={29} />
          <StatusCell $width={34}>NUM</StatusCell>
          <StatusCell $width={33} />
          <SizeGrip>
            <svg width="18" height="17" viewBox="0 0 18 17"><path d="M6 16L17 5M10 16l7-7M14 16l3-3" stroke="#999" strokeWidth="1.500" /></svg>
          </SizeGrip>
        </StatusBar>
      </Client>
    </Frame>
  );
}
